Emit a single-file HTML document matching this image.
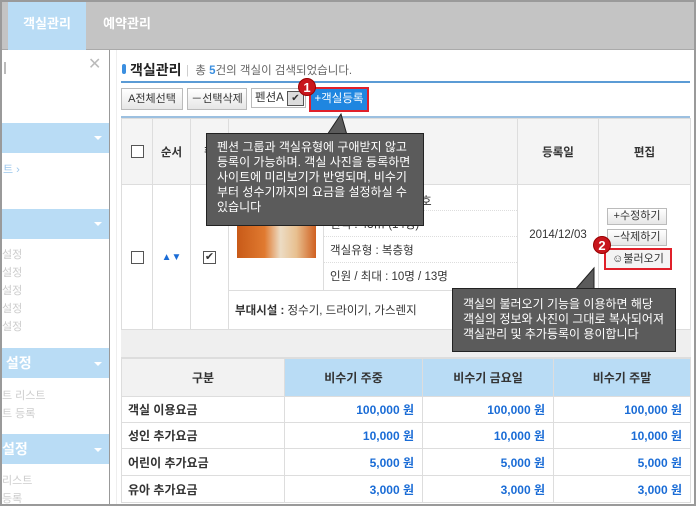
<!DOCTYPE html>
<html><head><meta charset="utf-8"><style>
*{margin:0;padding:0;box-sizing:border-box}
body{width:696px;height:506px;overflow:hidden;background:#fff;font-family:"Liberation Sans","Noto Sans CJK KR",sans-serif;font-size:12px;color:#333;position:relative}
.a{position:absolute}
.frame{left:0;top:0;width:696px;height:506px;border:2px solid #9a9a9a}
.top{left:0;top:0;width:696px;height:50px;background:#c4c4c4;border-bottom:1px solid #aaa}
.tab{top:0;height:50px;color:#fff;font-weight:bold;font-size:13px;line-height:48px;text-align:center}
.sb{left:2px;top:50px;width:108px;height:456px;border-right:1px solid #999;background:#fff}
.sbh{left:2px;width:107px;height:30px;background:#b9dcf5;color:#fff;font-weight:bold;font-size:14px;line-height:30px}
.sbt{left:2px;color:#ccc;font-size:11px}
.arr{width:0;height:0;border-left:4px solid transparent;border-right:4px solid transparent;border-top:4px solid #fff}
.btn{top:88px;height:22px;border:1px solid #bbb;background:linear-gradient(#fff,#e6e6e6);font-size:11px;line-height:20px;text-align:center;color:#333}
td,th{border:1px solid #ddd}
.tip{background:#5b5b5b;border:1px solid #222;color:#fff;font-size:12px;line-height:15px;padding:6px 10px;white-space:nowrap;overflow:hidden}
.num{color:#1a6cd6;font-weight:bold;text-align:right;padding-right:8px}
.lbl{font-weight:bold;color:#333;padding-left:6px;text-align:left}
.badge{width:18px;height:18px;border-radius:50%;background:#c8161d;color:#fff;font-weight:bold;font-size:13px;line-height:18px;text-align:center;border:1px solid #900}
</style></head><body>
<div class="a top"></div>
<div class="a tab" style="left:8px;width:78px;background:#b9dcf5">객실관리</div>
<div class="a tab" style="left:88px;width:78px">예약관리</div>
<div class="a sb"></div>
<div class="a" style="left:4px;top:62px;width:2px;height:12px;background:#bbb"></div>
<div class="a" style="left:88px;top:54px;color:#bbb;font-size:16px">✕</div>
<div class="a sbh" style="top:123px"></div><div class="a arr" style="left:94px;top:136px"></div>
<div class="a" style="left:3px;top:161px;color:#9cc7ec;font-size:11px">트 ›</div>
<div class="a sbh" style="top:209px"></div><div class="a arr" style="left:94px;top:222px"></div>
<div class="a sbt" style="top:246px;line-height:18px">설정<br>설정<br>설정<br>설정<br>설정</div>
<div class="a sbh" style="top:348px">&nbsp;설정</div><div class="a arr" style="left:94px;top:362px"></div>
<div class="a sbt" style="top:387px;line-height:18px">트 리스트<br>트 등록</div>
<div class="a sbh" style="top:434px">설정</div><div class="a arr" style="left:94px;top:448px"></div>
<div class="a sbt" style="top:472px;line-height:18px">리스트<br>등록</div>
<div class="a" style="left:116px;top:50px;width:1px;height:456px;background:#eee"></div>

<div class="a" style="left:122px;top:64px;width:4px;height:10px;border-radius:2px;background:#3b8fe0"></div>
<div class="a" style="left:130px;top:60px;font-size:14px;font-weight:bold;color:#222">객실관리</div>
<div class="a" style="left:186px;top:62px;font-size:11.5px;color:#666"><span style="color:#ccc">|</span>&nbsp; 총 <b style="color:#3b8fe0">5</b>건의 객실이 검색되었습니다.</div>
<div class="a" style="left:121px;top:81px;width:569px;height:2px;background:#5b9bd5"></div>
<div class="a btn" style="left:121px;width:62px">A전체선택</div>
<div class="a btn" style="left:187px;width:60px">－선택삭제</div>
<div class="a" style="left:251px;top:88px;width:55px;height:20px;border:1px solid #bbb;font-size:11.5px;line-height:18px;padding-left:3px">펜션A</div>
<div class="a" style="left:287px;top:91px;width:17px;height:15px;border:1px solid #555;background:#ddd;text-align:center;font-size:10px;line-height:13px">✔</div>
<div class="a" style="left:309px;top:87px;width:60px;height:25px;border:2px solid #e0202a;background:#1f86e0;color:#fff;font-size:11.5px;line-height:20px;text-align:center">+객실등록</div>
<div class="a badge" style="left:298px;top:78px">1</div>
<div class="a" style="left:121px;top:116px;width:569px;height:2px;background:#9cc0e0"></div>

<table class="a" style="left:121px;top:118px;width:570px;border-collapse:collapse;font-size:11.5px;text-align:center">
<tr style="height:66px;background:#f4f4f4;font-weight:bold"><td style="width:31px"><div style="width:13px;height:13px;border:1px solid #555;background:#fff;margin:auto"></div></td><td style="width:38px">순서</td><td style="width:38px">활</td><td colspan="2" style="width:289px">객실정보</td><td style="width:81px">등록일</td><td style="width:92px">편집</td></tr>
<tr style="height:106px"><td rowspan="2"><div style="width:13px;height:13px;border:1px solid #555;margin:auto"></div></td><td rowspan="2" style="color:#1a6cd6;font-size:10px">▲▼</td><td rowspan="2"><div style="width:13px;height:13px;border:1px solid #555;margin:auto;font-size:11px;line-height:11px">✔</div></td>
<td style="width:95px;border-right:1px solid #ddd"></td>
<td></td>
<td rowspan="2" style="vertical-align:top;padding-top:44px">2014/12/03</td><td rowspan="2"></td></tr>
<tr style="height:39px"><td colspan="2" style="text-align:left;padding-left:6px"><b>부대시설 :</b> 정수기, 드라이기, 가스렌지</td></tr>
</table>
<div class="a" style="left:237px;top:190px;width:79px;height:68px;background:linear-gradient(90deg,#c85a18 0%,#e07a30 35%,#ecdcc4 55%,#e8c090 75%,#d06020 100%)"></div>
<div class="a" style="left:414px;top:192px;font-size:12px">1호</div>
<div class="a" style="left:330px;top:216px;font-size:11.5px">면적 : 43㎡ (14평)</div>
<div class="a" style="left:330px;top:242px;font-size:11.5px">객실유형 : 복층형</div>
<div class="a" style="left:330px;top:268px;font-size:11.5px">인원 / 최대 : 10명 / 13명</div>
<div class="a" style="left:324px;top:210px;width:193px;border-top:1px dotted #ddd"></div>
<div class="a" style="left:324px;top:236px;width:193px;border-top:1px dotted #ddd"></div>
<div class="a" style="left:324px;top:262px;width:193px;border-top:1px dotted #ddd"></div>
<div class="a btn" style="left:607px;top:208px;width:60px;height:17px;line-height:15px">+수정하기</div>
<div class="a btn" style="left:607px;top:229px;width:60px;height:17px;line-height:15px">−삭제하기</div>
<div class="a" style="left:604px;top:248px;width:68px;height:22px;border:2px solid #e0202a;background:#f4f4f4;font-size:11px;line-height:18px;text-align:center">☺불러오기</div>
<div class="a badge" style="left:593px;top:236px">2</div>
<div class="a" style="left:121px;top:330px;width:570px;height:28px;background:#efefef;border-bottom:1px solid #ddd"></div>

<table class="a" style="left:121px;top:358px;width:570px;border-collapse:collapse;font-size:12px;text-align:center">
<tr style="height:38px;font-weight:bold"><td style="width:163px;background:#f2f2f2">구분</td><td style="width:138px;background:#b9dcf5">비수기 주중</td><td style="width:131px;background:#b9dcf5">비수기 금요일</td><td style="background:#b9dcf5">비수기 주말</td></tr>
<tr style="height:26px"><td class="lbl">객실 이용요금</td><td class="num">100,000 원</td><td class="num">100,000 원</td><td class="num">100,000 원</td></tr>
<tr style="height:26px"><td class="lbl">성인 추가요금</td><td class="num">10,000 원</td><td class="num">10,000 원</td><td class="num">10,000 원</td></tr>
<tr style="height:27px"><td class="lbl">어린이 추가요금</td><td class="num">5,000 원</td><td class="num">5,000 원</td><td class="num">5,000 원</td></tr>
<tr style="height:27px"><td class="lbl">유아 추가요금</td><td class="num">3,000 원</td><td class="num">3,000 원</td><td class="num">3,000 원</td></tr>
</table>

<svg class="a" style="left:325px;top:112px" width="30" height="24"><polygon points="2,23 16,2 22,23" fill="#5b5b5b" stroke="#222"/></svg>
<div class="a tip" style="left:206px;top:133px;width:218px;height:93px;padding:6px 0 0 10px">펜션 그룹과 객실유형에 구애받지 않고<br>등록이 가능하며. 객실 사진을 등록하면<br>사이트에 미리보기가 반영되며, 비수기<br>부터 성수기까지의 요금을 설정하실 수<br>있습니다</div>
<svg class="a" style="left:572px;top:266px" width="30" height="26"><polygon points="2,25 22,2 22,25" fill="#5b5b5b" stroke="#222"/></svg>
<div class="a tip" style="left:452px;top:288px;width:224px;height:64px;padding:8px 0 0 10px">객실의 불러오기 기능을 이용하면 해당<br>객실의 정보와 사진이 그대로 복사되어져<br>객실관리 및 추가등록이 용이합니다</div>
<div class="a frame"></div>
</body></html>
